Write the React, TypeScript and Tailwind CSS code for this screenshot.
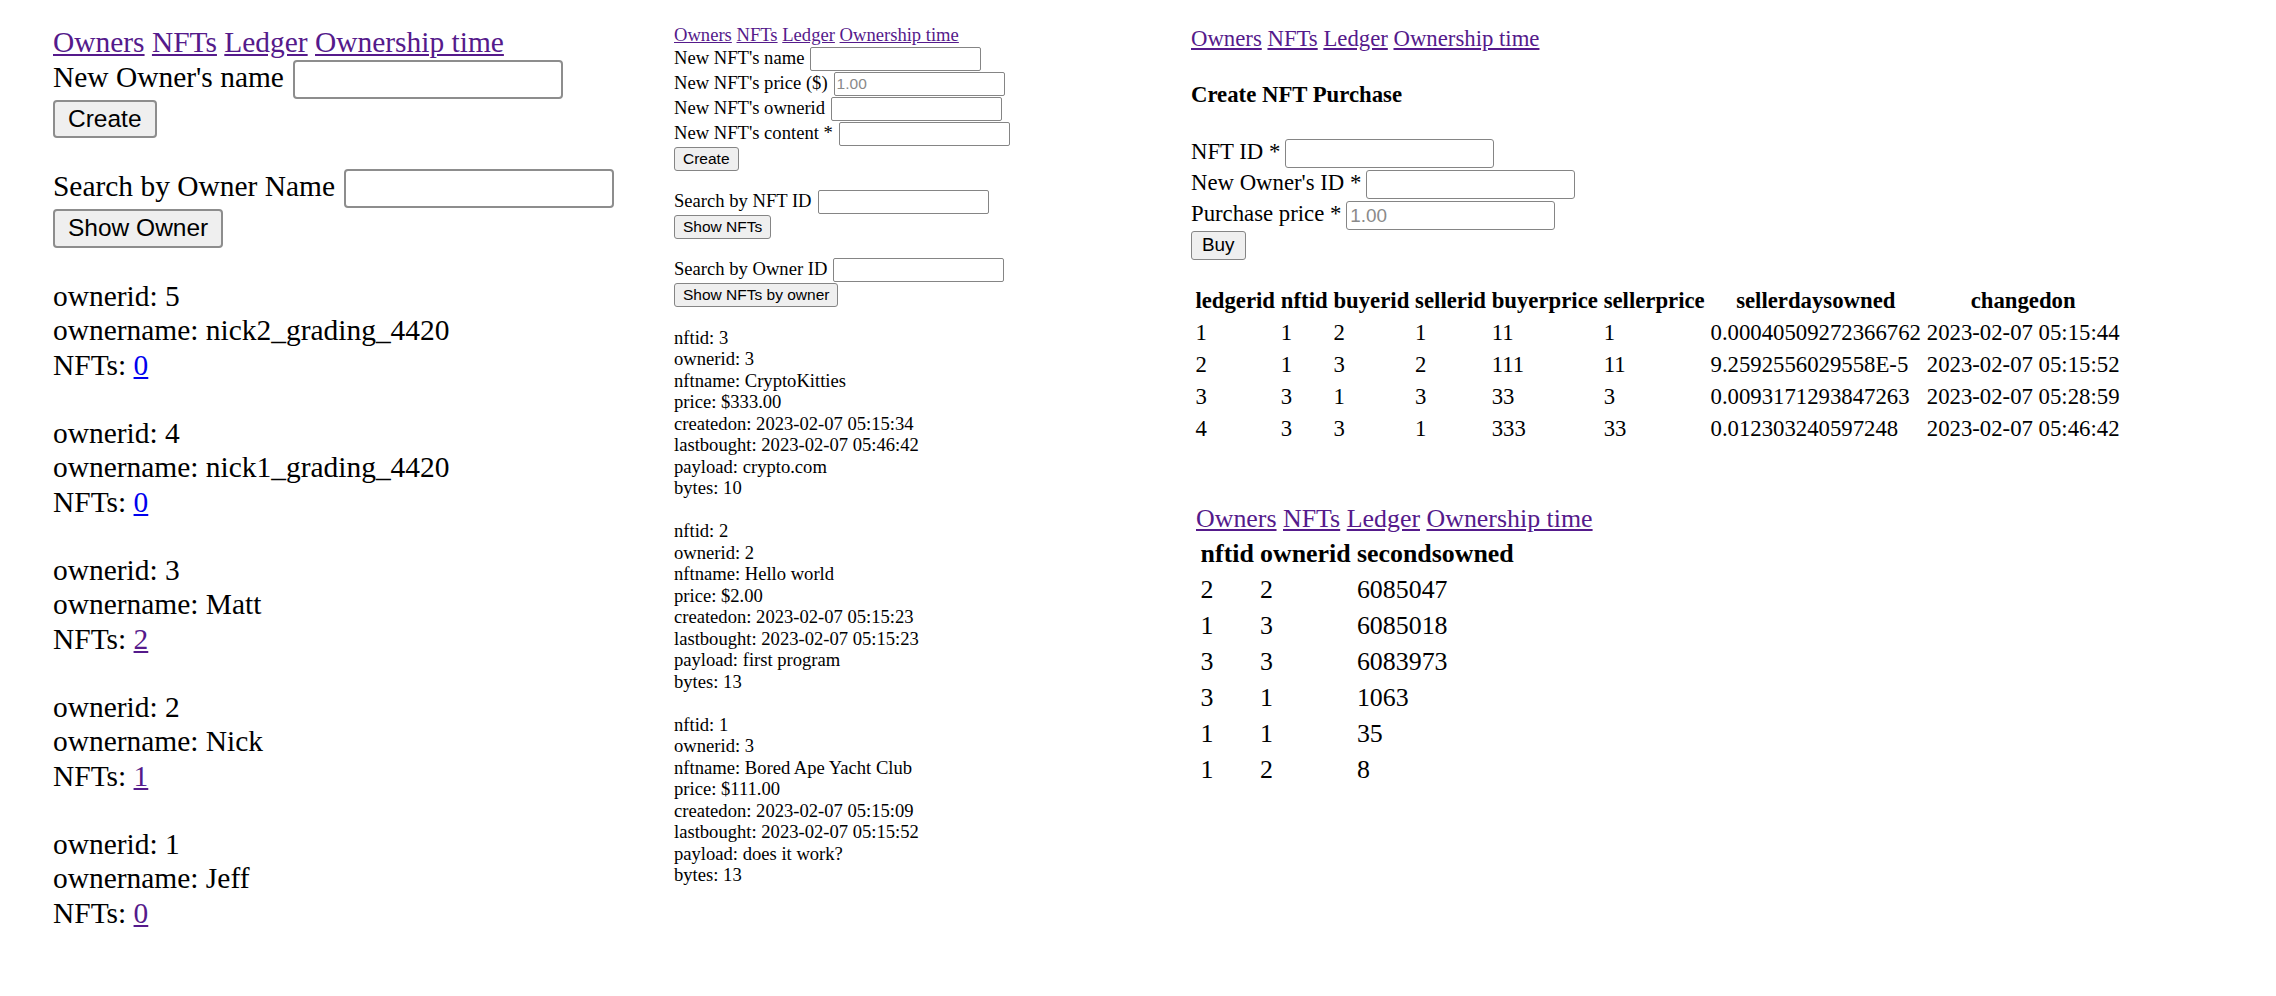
import React from 'react';

interface Owner {
    id: number;
    name: string;
    nfts: number;
    visited: boolean;
}

interface Nft {
    nftid: number;
    ownerid: number;
    nftname: string;
    price: string;
    createdon: string;
    lastbought: string;
    payload: string;
    bytes: number;
}

const owners: Owner[] = [
    { id: 5, name: 'nick2_grading_4420', nfts: 0, visited: false },
    { id: 4, name: 'nick1_grading_4420', nfts: 0, visited: false },
    { id: 3, name: 'Matt', nfts: 2, visited: true },
    { id: 2, name: 'Nick', nfts: 1, visited: true },
    { id: 1, name: 'Jeff', nfts: 0, visited: true },
];

const nfts: Nft[] = [
    {
        nftid: 3,
        ownerid: 3,
        nftname: 'CryptoKitties',
        price: '$333.00',
        createdon: '2023-02-07 05:15:34',
        lastbought: '2023-02-07 05:46:42',
        payload: 'crypto.com',
        bytes: 10,
    },
    {
        nftid: 2,
        ownerid: 2,
        nftname: 'Hello world',
        price: '$2.00',
        createdon: '2023-02-07 05:15:23',
        lastbought: '2023-02-07 05:15:23',
        payload: 'first program',
        bytes: 13,
    },
    {
        nftid: 1,
        ownerid: 3,
        nftname: 'Bored Ape Yacht Club',
        price: '$111.00',
        createdon: '2023-02-07 05:15:09',
        lastbought: '2023-02-07 05:15:52',
        payload: 'does it work?',
        bytes: 13,
    },
];

const ledgerHead = ['ledgerid', 'nftid', 'buyerid', 'sellerid', 'buyerprice', 'sellerprice', 'sellerdaysowned', 'changedon'];

const ledger = [
    ['1', '1', '2', '1', '11', '1', '0.00040509272366762', '2023-02-07 05:15:44'],
    ['2', '1', '3', '2', '111', '11', '9.2592556029558E-5', '2023-02-07 05:15:52'],
    ['3', '3', '1', '3', '33', '3', '0.0093171293847263', '2023-02-07 05:28:59'],
    ['4', '3', '3', '1', '333', '33', '0.012303240597248', '2023-02-07 05:46:42'],
];

const ownership = [
    ['2', '2', '6085047'],
    ['1', '3', '6085018'],
    ['3', '3', '6083973'],
    ['3', '1', '1063'],
    ['1', '1', '35'],
    ['1', '2', '8'],
];

const visited = 'text-[#551a8b] underline';

const NavLinks: React.FC = () => (
    <div>
        <a href="#" className={visited}>Owners</a>{' '}
        <a href="#" className={visited}>NFTs</a>{' '}
        <a href="#" className={visited}>Ledger</a>{' '}
        <a href="#" className={visited}>Ownership time</a>
    </div>
);

// big zoomed owners page
const OwnersPanel: React.FC = () => {
    const input = 'h-[39px] w-[270px] shrink-0 rounded-[4px] border-2 border-[#8d8d8d] bg-white';
    const button =
        "h-[38px] rounded-[4px] border-2 border-[#8d8d8d] bg-[#efefef] px-[13px] font-['Liberation_Sans',Arial,sans-serif] text-[24.5px] leading-none text-black";

    return (
        <div className="flex w-[621px] shrink-0 flex-col items-start pl-[53px] pt-[25px] text-[29.44px] leading-[34px]">
            <NavLinks />
            <div className="mt-[1px] flex items-start gap-[9px]">
                <span>New Owner's name</span>
                <input className={input} />
            </div>
            <button className={`mt-[1px] ${button}`}>Create</button>

            <div className="mt-[31px] flex items-start gap-[9px]">
                <span>Search by Owner Name</span>
                <input className={input} />
            </div>
            <button className={`mt-[1px] h-[39px] ${button}`}>Show Owner</button>

            <div className="mt-[31px] leading-[34.25px]">
                {owners.map((o) => (
                    <div key={o.id} className="mb-[34.25px]">
                        <div>ownerid: {o.id}</div>
                        <div>ownername: {o.name}</div>
                        <div>
                            NFTs:{' '}
                            <a href="#" className={o.visited ? visited : 'text-[#0000ee] underline'}>
                                {o.nfts}
                            </a>
                        </div>
                    </div>
                ))}
            </div>
        </div>
    );
};

const NftsPanel: React.FC = () => {
    const input =
        "h-[24px] w-[171px] shrink-0 rounded-[2px] border border-[#858585] bg-white px-[2px] font-['Liberation_Sans',Arial,sans-serif] text-[15.5px] placeholder:text-[#8a8a8a]";
    const button =
        "h-[24px] rounded-[3px] border border-[#858585] bg-[#efefef] px-[8px] font-['Liberation_Sans',Arial,sans-serif] text-[15.5px] leading-none text-black";
    const fields = ["New NFT's name", "New NFT's price ($)", "New NFT's ownerid", "New NFT's content *"];

    return (
        <div className="flex w-[570px] shrink-0 flex-col items-start pl-[53px] pt-[24px] text-[18.6px] leading-[21.5px]">
            <NavLinks />
            {fields.map((f) => (
                <div key={f} className="mt-[1px] flex items-start gap-[6px]">
                    <span>{f}</span>
                    <input className={input} placeholder={f.includes('price') ? '1.00' : undefined} />
                </div>
            ))}
            <button className={`mt-[1px] ${button}`}>Create</button>

            <div className="mt-[19px] flex items-start gap-[6px]">
                <span>Search by NFT ID</span>
                <input className={input} />
            </div>
            <button className={`mt-[1px] ${button}`}>Show NFTs</button>

            <div className="mt-[19px] flex items-start gap-[6px]">
                <span>Search by Owner ID</span>
                <input className={input} />
            </div>
            <button className={`mt-[1px] ${button}`}>Show NFTs by owner</button>

            <div className="mt-[20px]">
                {nfts.map((n) => (
                    <div key={n.nftid} className="mb-[21.5px]">
                        <div>nftid: {n.nftid}</div>
                        <div>ownerid: {n.ownerid}</div>
                        <div>nftname: {n.nftname}</div>
                        <div>price: {n.price}</div>
                        <div>createdon: {n.createdon}</div>
                        <div>lastbought: {n.lastbought}</div>
                        <div>payload: {n.payload}</div>
                        <div>bytes: {n.bytes}</div>
                    </div>
                ))}
            </div>
        </div>
    );
};

const LedgerPanel: React.FC = () => {
    const input =
        "h-[29px] w-[209px] shrink-0 rounded-[3px] border border-[#858585] bg-white px-[3px] font-['Liberation_Sans',Arial,sans-serif] text-[18.9px] placeholder:text-[#8a8a8a]";

    return (
        <div className="flex flex-col items-start pt-[26px] text-[22.75px] leading-[26.2px]">
            <NavLinks />
            <div className="mt-[30px] font-bold">Create NFT Purchase</div>
            <div className="mt-[31px] flex items-start gap-[5px]">
                <span>NFT ID *</span>
                <input className={input} />
            </div>
            <div className="mt-[2px] flex items-start gap-[5px]">
                <span>New Owner's ID *</span>
                <input className={input} />
            </div>
            <div className="mt-[2px] flex items-start gap-[5px]">
                <span>Purchase price *</span>
                <input className={input} placeholder="1.00" />
            </div>
            <button className="mt-[1px] h-[29px] rounded-[3px] border border-[#858585] bg-[#efefef] px-[10px] font-['Liberation_Sans',Arial,sans-serif] text-[18.9px] leading-none text-black">
                Buy
            </button>

            <table className="mt-[23px] border-separate border-spacing-x-[3.6px] border-spacing-y-[3.96px]">
                <thead>
                    <tr>
                        {ledgerHead.map((h) => (
                            <th key={h} className="p-[1.42px] text-center font-bold">
                                {h}
                            </th>
                        ))}
                    </tr>
                </thead>
                <tbody>
                    {ledger.map((row) => (
                        <tr key={row[0]}>
                            {row.map((c, i) => (
                                <td key={i} className="p-[1.42px] text-left">
                                    {c}
                                </td>
                            ))}
                        </tr>
                    ))}
                </tbody>
            </table>
        </div>
    );
};

const OwnershipPanel: React.FC = () => (
    <div className="mt-[58px] flex flex-col items-start pl-[5px] text-[25.9px] leading-[29.8px]">
        <NavLinks />
        <table className="border-separate border-spacing-[3.3px]">
            <thead>
                <tr>
                    {['nftid', 'ownerid', 'secondsowned'].map((h) => (
                        <th key={h} className="p-[1.62px] text-center font-bold">
                            {h}
                        </th>
                    ))}
                </tr>
            </thead>
            <tbody>
                {ownership.map((row, r) => (
                    <tr key={r}>
                        {row.map((c, i) => (
                            <td key={i} className="p-[1.62px] text-left">
                                {c}
                            </td>
                        ))}
                    </tr>
                ))}
            </tbody>
        </table>
    </div>
);

export default function App() {
    return (
        <div className="flex min-h-[996px] w-[2276px] bg-white font-['Liberation_Serif','Times_New_Roman',serif] text-black">
            <OwnersPanel />
            <NftsPanel />
            <div className="flex flex-col">
                <LedgerPanel />
                <OwnershipPanel />
            </div>
        </div>
    );
}
